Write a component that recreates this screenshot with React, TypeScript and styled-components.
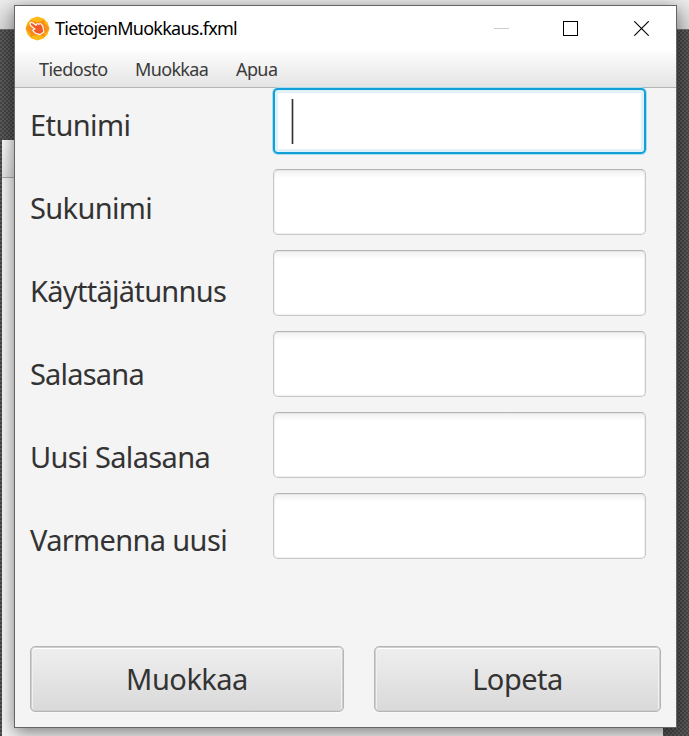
import React from "react";
import styled, { createGlobalStyle, css } from "styled-components";

const GlobalStyle = createGlobalStyle`
  * { box-sizing: border-box; }
  html, body { margin: 0; padding: 0; overflow: hidden; }
  body { font-family: "Noto Sans", "Open Sans", sans-serif; }
`;

const Desktop = styled.div`
  position: relative;
  width: 689px;
  height: 736px;
  overflow: hidden;
  background-color: #505050;
  background-image: conic-gradient(#444 25%, #5a5a5a 0 50%, #444 0 75%, #5a5a5a 0);
  background-size: 4px 4px;
`;

const TopStrip = styled.div`
  height: 30px;
  background: linear-gradient(#ececec, #d6d6d6);
  border-bottom: 1px solid #6e706e;
`;

const BackWindow = styled.div`
  position: absolute;
  left: 2px;
  top: 140px;
  width: 661px;
  height: 596px;
  background: #f4f4f4;
`;

const BackWindowBar = styled.div`
  height: 38px;
  background: linear-gradient(#fafafa, #e4e4e4);
  border-bottom: 1px solid #ababab;
`;

const Window = styled.main`
  position: absolute;
  left: 14px;
  top: 5px;
  width: 663px;
  height: 723px;
  display: flex;
  flex-direction: column;
  border: 1px solid #656565;
  background: #f4f4f4;
  box-shadow: 0 4px 16px rgba(0, 0, 0, 0.5);
`;

const TitleBar = styled.header`
  height: 44px;
  flex: none;
  display: flex;
  align-items: center;
  padding-left: 10px;
  background: #fff;
`;

const Title = styled.h1`
  flex: 1;
  margin: 0 0 1px 5px;
  font-size: 18px;
  font-weight: 400;
  line-height: 24px;
  color: #000;
  white-space: nowrap;
`;

const Controls = styled.div`
  display: flex;
`;

const ControlButton = styled.button<{ $inset?: number }>`
  width: 70px;
  height: 42px;
  padding: 0 ${(p) => p.$inset ?? 0}px 0 0;
  border: 0;
  background: none;
  display: flex;
  align-items: center;
  justify-content: center;
`;

const MenuBar = styled.nav`
  height: 38px;
  flex: none;
  display: flex;
  align-items: center;
  gap: 28px;
  padding-left: 24px;
  background: linear-gradient(#fdfdfd, #e4e4e4);
  border-bottom: 1px solid #b5b5b5;
`;

const Tracked = styled.span<{ $width: number; $spacing: number }>`
  display: inline-block;
  width: ${(p) => p.$width}px;
  letter-spacing: ${(p) => p.$spacing}px;
  white-space: nowrap;
`;

const MenuItem = styled.span`
  font-size: 18px;
  line-height: 24px;
  color: #3a3a3a;
`;

const Form = styled.form`
  flex: 1;
  display: flex;
  flex-direction: column;
  justify-content: space-between;
  padding: 0 15px 15px;
`;

const Fields = styled.div`
  display: grid;
  grid-template-columns: 243px 373px;
`;

const Labels = styled.div`
  display: flex;
  flex-direction: column;
  gap: 43px;
  padding-top: 17px;
`;

const Label = styled.label`
  height: 40px;
  line-height: 40px;
  font-size: 29px;
  color: #333;
`;

const Inputs = styled.div`
  display: flex;
  flex-direction: column;
  gap: 15px;
`;

const Input = styled.div<{ $focused?: boolean }>`
  height: 66px;
  border-radius: 5px;
  padding: 11px 19px;
  background: linear-gradient(#f0f0f0, #fff 8px);
  border: 1px solid #c8c8c8;
  border-top-color: #b5b5b5;
  box-shadow: inset 0 0 0 1px rgba(200, 200, 200, 0.25);
  ${(p) =>
    p.$focused &&
    css`
      background: #fff;
      padding: 9px 16px;
      border: 2px solid #109fd6;
      box-shadow: 0 0 0 1px #a9dced, inset 0 0 0 3px #e0f1f8;
    `}
`;

const Caret = styled.div`
  width: 3px;
  height: 45px;
  background: linear-gradient(90deg, #bbb 0 1px, #333 1px 2px, #bbb 2px 3px);
`;

const Actions = styled.div`
  display: grid;
  grid-template-columns: 314px 287px;
  gap: 30px;
`;

const Button = styled.button`
  height: 66px;
  padding: 0;
  display: flex;
  align-items: center;
  justify-content: center;
  border: 1px solid #b5b5b5;
  border-radius: 5px;
  background: linear-gradient(#efefef, #d9d9d9);
  box-shadow: inset 0 0 0 1px #d0d0d0, inset 0 2px 0 #fff, inset 2px 0 0 #f0f0f0,
    inset -2px 0 0 #f0f0f0, 0 1px 0 #fafafa;
  font: 400 29px/40px "Noto Sans", sans-serif;
  color: #333;
`;

const AppLogo = () => (
  <svg width="25" height="25" viewBox="0 0 25 25">
    <path d="M12.5 0.5 18.5 2.5 22.5 6.5 24.5 12.5 22.5 18.5 18.5 22.5 12.5 24.5 6.5 22.5 2.5 18.5 0.5 12.5 2.5 6.5 6.5 2.5Z" fill="#fdb913" />
    <ellipse cx="7" cy="12.5" rx="5.8" ry="4.8" fill="#f7941d" />
    <ellipse cx="18" cy="12.5" rx="5.8" ry="4.8" fill="#f7941d" />
    <path d="M5.5 4Q12.5 8 19.5 4Q20 12.5 19.5 21Q12.5 17 5.5 21Q5 12.5 5.5 4Z" fill="#f58220" opacity=".8" />
    <path d="M5.2 7.2Q6.2 5.6 8 7L11 9.3Q12 6.8 13.8 8.2Q15.8 6.9 16.8 9Q18.3 9.8 18.1 12L18.8 16 15 18.6 10.4 17.2 7.8 14.5Q8.4 12.9 10 13.2L5.5 9.5Z" fill="#f15a24" stroke="#fff" strokeWidth="1.1" strokeLinejoin="round" />
  </svg>
);

const menus = [
  { text: "Tiedosto", width: 68, spacing: -0.52 },
  { text: "Muokkaa", width: 73, spacing: -0.65 },
  { text: "Apua", width: 42, spacing: -0.6 },
];

const labels = [
  { text: "Etunimi", width: 100, spacing: -0.6 },
  { text: "Sukunimi", width: 123, spacing: -0.65 },
  { text: "Käyttäjätunnus", width: 196, spacing: -0.7 },
  { text: "Salasana", width: 114, spacing: -0.8 },
  { text: "Uusi Salasana", width: 180, spacing: -0.63 },
  { text: "Varmenna uusi", width: 197, spacing: -0.65 },
];

const buttons = [
  { text: "Muokkaa", width: 122, spacing: -0.5 },
  { text: "Lopeta", width: 91, spacing: -0.5 },
];

export default function App() {
  return (
    <>
      <GlobalStyle />
      <Desktop>
        <TopStrip />
        <BackWindow>
          <BackWindowBar />
        </BackWindow>
        <Window>
          <TitleBar>
            <AppLogo />
            <Title>
              <Tracked $width={183} $spacing={-0.74}>TietojenMuokkaus.fxml</Tracked>
            </Title>
            <Controls>
              <ControlButton aria-label="Minimize">
                <svg width="15" height="15" shapeRendering="crispEdges">
                  <path d="M0 7.5H15" stroke="#ccc" />
                </svg>
              </ControlButton>
              <ControlButton aria-label="Maximize" $inset={2}>
                <svg width="15" height="15" shapeRendering="crispEdges">
                  <rect x=".5" y=".5" width="14" height="14" fill="none" stroke="#000" />
                </svg>
              </ControlButton>
              <ControlButton aria-label="Close">
                <svg width="15" height="15">
                  <path d="M.3.3 14.7 14.7M14.7.3.3 14.7" stroke="#000" strokeWidth="1.1" />
                </svg>
              </ControlButton>
            </Controls>
          </TitleBar>
          <MenuBar>
            {menus.map((m) => (
              <MenuItem key={m.text}>
                <Tracked $width={m.width} $spacing={m.spacing}>{m.text}</Tracked>
              </MenuItem>
            ))}
          </MenuBar>
          <Form>
            <Fields>
              <Labels>
                {labels.map((l) => (
                  <Label key={l.text}>
                    <Tracked $width={l.width} $spacing={l.spacing}>{l.text}</Tracked>
                  </Label>
                ))}
              </Labels>
              <Inputs>
                {labels.map((l, i) => (
                  <Input key={l.text} $focused={i === 0}>
                    {i === 0 && <Caret />}
                  </Input>
                ))}
              </Inputs>
            </Fields>
            <Actions>
              {buttons.map((b) => (
                <Button key={b.text} type="button">
                  <Tracked $width={b.width} $spacing={b.spacing}>{b.text}</Tracked>
                </Button>
              ))}
            </Actions>
          </Form>
        </Window>
      </Desktop>
    </>
  );
}
